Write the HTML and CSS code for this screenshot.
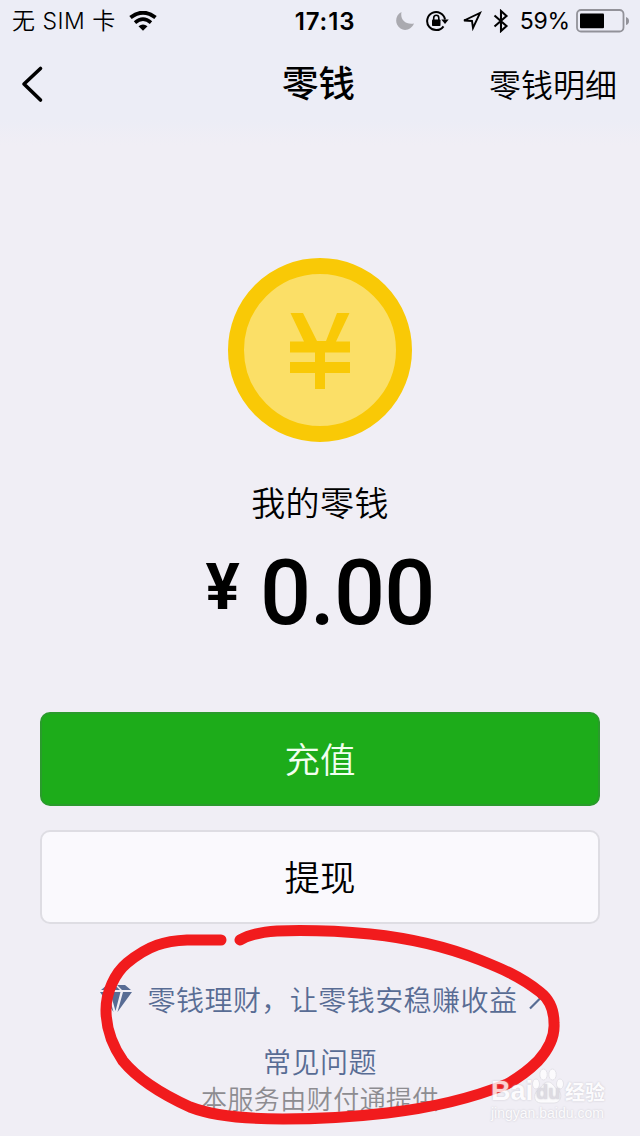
FILE: index.html
```html
<!DOCTYPE html>
<html lang="zh-CN">
<head>
    <meta charset="UTF-8">
    <meta name="viewport" content="width=device-width, initial-scale=1.0">
    <title>零钱</title>
    <link rel="stylesheet" href="styles.css">
</head>
<body>
    <div class="status-bar">
        <div class="status-left">
            <span class="carrier">无 SIM 卡</span>
            <svg class="wifi" width="28" height="20" viewBox="0 0 28 20">
                <path d="M1.500 6.500Q14-3 26.500 6.500" fill="none" stroke="#000" stroke-width="4"/>
                <path d="M6 11.600Q14 4.800 22 11.600" fill="none" stroke="#000" stroke-width="3.600"/>
                <path d="M9.500 15.300Q14 11.800 18.500 15.300L14 19.800Z"/>
            </svg>
        </div>
        <div class="time">17:13</div>
        <div class="status-right">
            <svg width="18" height="20" viewBox="0 0 18 20">
                <path d="M5.500 1C4 8 9 14 18 12.500C15.500 18.500 9 20.500 4.500 17.500C-2 13-.8 4 5.500 1Z" fill="#aaaab0"/>
            </svg>
            <svg class="lock" width="23" height="22" viewBox="0 0 23 22">
                <path d="M17.500 16.300A9 9 0 1 1 19 9.500" fill="none" stroke="#000" stroke-width="2"/>
                <path d="M15.300 9.500H22.700L19 14Z"/>
                <rect x="6" y="9.500" width="8.500" height="6.500" rx=".8"/>
                <path d="M7.700 10V8a2.550 2.700 0 0 1 5.100 0V10" fill="none" stroke="#000" stroke-width="1.600"/>
            </svg>
            <svg class="arrow" width="20" height="20" viewBox="0 0 20 20">
                <path d="M2 9.500L18 2L11 17L10 10Z" fill="none" stroke="#000" stroke-width="1.900"/>
            </svg>
            <svg class="bluetooth" width="16" height="24" viewBox="0 0 16 24">
                <path d="M1.500 6.500L13.500 17L8 22V2L13.500 7L1.500 17.500" fill="none" stroke="#000" stroke-width="2.100"/>
            </svg>
            <span class="percent">59%</span>
            <svg class="battery" width="54" height="24" viewBox="0 0 54 24">
                <rect x="1" y="1" width="46.500" height="21.500" rx="4" fill="none" stroke="#929299" stroke-width="1.800"/>
                <rect x="4" y="4.500" width="24" height="14.800" rx="1"/>
                <path d="M50 8Q53 9 53 12Q53 15 50 16Z" fill="#929299"/>
            </svg>
        </div>
    </div>

    <div class="nav">
        <a class="back" href="#">
            <svg width="24" height="38" viewBox="0 0 24 38">
                <path d="M20.500 3.500L4 19L20.500 35" fill="none" stroke="#000" stroke-width="3.600" stroke-linecap="round" stroke-linejoin="round"/>
            </svg>
        </a>
        <h1>零钱</h1>
        <a class="detail" href="#">零钱明细</a>
    </div>

    <div class="balance">
        <svg class="coin" width="184" height="184" viewBox="0 0 184 184">
            <circle cx="92" cy="92" r="84" fill="#fbdf67" stroke="#f9c906" stroke-width="16"/>
            <path d="M62.500 55H75L89 83H98L109 55H121.500L108 83.500H122V94.500H97V104H122V115H97V131H87V115H62V104H87V94.500H62V83.500H76Z" fill="#f9c906"/>
        </svg>
        <div class="label">我的零钱</div>
        <div class="amount"><span class="yen">¥</span><span class="number">0.00</span></div>
    </div>

    <div class="buttons">
        <button class="btn recharge">充值</button>
        <button class="btn withdraw">提现</button>
    </div>

    <div class="footer">
        <a class="invest" href="#">
            <svg class="diamond" width="34" height="30" viewBox="0 0 34 30">
                <path d="M8 1H15L10 6H2ZM18 1H26L32 6H23ZM16.500 1.500L21 6H12ZM1 8H9L14.500 28ZM11 8H21.500L16.500 27ZM24 8H33L18.500 28Z" fill="#586c94"/>
            </svg>
            <span>零钱理财，让零钱安稳赚收益</span>
            <svg class="more" width="14" height="24" viewBox="0 0 14 24">
                <path d="M4 1L13.500 11L3 21.500" fill="none" stroke="#586c94" stroke-width="2.200"/>
            </svg>
        </a>
        <a class="faq" href="#">常见问题</a>
        <div class="provider">本服务由财付通提供</div>
    </div>

    <!-- hand drawn circle over the footer links -->
    <svg class="circle-mark" width="640" height="226" viewBox="0 910 640 226">
        <path d="M221 940H187C165 941 149 945 127 963C115 973 106 992 106 1010C106 1030 114 1048 123 1061C141 1083 168 1097 190 1107C216 1117 250 1119 283 1119C320 1119 353 1117 387 1113C430 1108 470 1099 507 1084C520 1077 530 1069 538 1061C548 1050 555 1036 554 1023C554 1010 549 999 540 992C520 976 500 968 480 960C445 946 408 938 370 934C338 931 306 930 277 931C262 932 250 934 240 940" fill="none" stroke="#f11b1d" stroke-width="11" stroke-linecap="round" stroke-linejoin="round"/>
    </svg>

    <div class="watermark">
        <div class="brand">
            <span class="bai">Bai</span>
            <span class="paw">
                <svg width="32" height="36" viewBox="0 0 32 36">
                    <g fill="#fff" stroke="#dcdae1" stroke-width=".8">
                        <ellipse cx="4" cy="16" rx="3.500" ry="5"/>
                        <ellipse cx="11.500" cy="6.500" rx="3.700" ry="5.500"/>
                        <ellipse cx="20.500" cy="6.500" rx="3.700" ry="5.500"/>
                        <ellipse cx="28" cy="16" rx="3.500" ry="5"/>
                        <path d="M16 14C21 14 22 20 27 23C31 28 28 35 22 35H9C2 35 1 27 5 23C10 20 11 14 16 14Z"/>
                    </g>
                </svg>
                <span class="du">du</span>
            </span>
            <span class="jingyan">经验</span>
        </div>
        <div class="url">jingyan.baidu.com</div>
    </div>
</body>
</html>
```

FILE: styles.css
```css
* {
    box-sizing: border-box;
}
body {
    margin: 0;
    width: 640px;
    height: 1136px;
    position: relative;
    overflow: hidden;
    background: linear-gradient(#ecedf6 0, #ecedf6 120px, #f0eef5 145px);
    color: #000;
    font-family: "Noto Sans CJK SC", sans-serif;
}
a {
    color: inherit;
    text-decoration: none;
}
svg {
    display: block;
    flex-shrink: 0;
}
.status-bar {
    display: grid;
    grid-template-columns: 1fr auto 1fr;
    align-items: center;
    height: 40px;
    padding: 1px 11px 0 12px;
    font-family: Inter, "Noto Sans CJK SC", sans-serif;
    font-size: 23px;
    line-height: 39px;
}
.status-left {
    display: flex;
    align-items: center;
    gap: 13px;
    white-space: nowrap;
}
.carrier {
    padding-top: 1px;
    letter-spacing: .5px;
    font-weight: 350;
}
.time {
    padding: 1px 0 0 9px;
    font-size: 24px;
    font-weight: 600;
    letter-spacing: .9px;
}
.status-right {
    display: flex;
    align-items: center;
    justify-content: flex-end;
}
.lock {
    margin-left: 12px;
}
.arrow {
    margin-left: 13px;
}
.bluetooth {
    margin-left: 11px;
}
.percent {
    margin-left: 11px;
    padding-top: 1px;
    letter-spacing: -.2px;
}
.battery {
    margin-left: 6px;
    margin-right: -1px;
}
.nav {
    display: grid;
    grid-template-columns: 1fr auto 1fr;
    align-items: center;
    height: 88px;
    padding: 0 23px 0 20px;
}
.nav h1 {
    margin: 0 0 4px;
    font-size: 36.5px;
    font-weight: 500;
    line-height: 50px;
}
.detail {
    justify-self: end;
    margin-bottom: 2px;
    font-size: 32px;
    font-weight: 350;
    line-height: 50px;
}
.balance {
    display: flex;
    flex-direction: column;
    align-items: center;
    padding-top: 130px;
}
.label {
    margin-top: 35px;
    font-size: 34px;
    font-weight: 350;
    letter-spacing: .4px;
    line-height: 50px;
}
.amount {
    display: flex;
    align-items: flex-start;
    gap: 20px;
    height: 101px;
    font-family: Roboto, sans-serif;
    font-size: 90px;
    font-weight: 500;
    line-height: 134px;
}
.number {
    letter-spacing: -1px;
}
.yen {
    font-size: 64px;
    font-weight: 700;
    line-height: 122px;
}
.buttons {
    display: flex;
    flex-direction: column;
    gap: 24px;
    padding: 84px 40px 0;
}
.btn {
    height: 94px;
    padding: 0 0 3px;
    border: 2px solid #2a9b2c;
    border-radius: 10px;
    font-family: inherit;
    font-size: 35.5px;
    font-weight: 350;
}
.recharge {
    background: #1dac1a;
    color: #f2fff0;
}
.withdraw {
    background: #faf9fd;
    border-color: #dedde3;
    color: #000;
}
.footer {
    display: flex;
    flex-direction: column;
    align-items: center;
    padding-top: 51px;
    color: #586c94;
    font-size: 28px;
    font-weight: 350;
    letter-spacing: .45px;
}
.invest {
    display: flex;
    align-items: center;
    height: 48px;
}
.diamond {
    margin-right: 15px;
}
.more {
    margin-left: 10px;
}
.faq {
    margin-top: 14px;
    line-height: 48px;
}
.provider {
    margin-top: -6px;
    color: #8d8c91;
    font-size: 26px;
    line-height: 38px;
}
.circle-mark {
    position: absolute;
    left: 0;
    top: 910px;
}
.watermark {
    position: absolute;
    left: 491px;
    top: 1067px;
    color: #fff;
    opacity: .8;
    text-shadow: 0 0 2px #bdbbc4;
}
.brand {
    display: flex;
    align-items: flex-end;
    height: 37px;
}
.bai {
    width: 41px;
    font: bold 27px/26px "Liberation Sans", sans-serif;
}
.paw {
    position: relative;
}
.du {
    position: absolute;
    left: 4px;
    bottom: 1px;
    color: #d9d7de;
    font: bold 20px/22px "Liberation Sans", sans-serif;
}
.jingyan {
    margin-left: 1px;
    font-size: 20px;
    font-weight: 700;
    line-height: 25px;
}
.url {
    font: 14px/18px "Liberation Sans", sans-serif;
}
```
